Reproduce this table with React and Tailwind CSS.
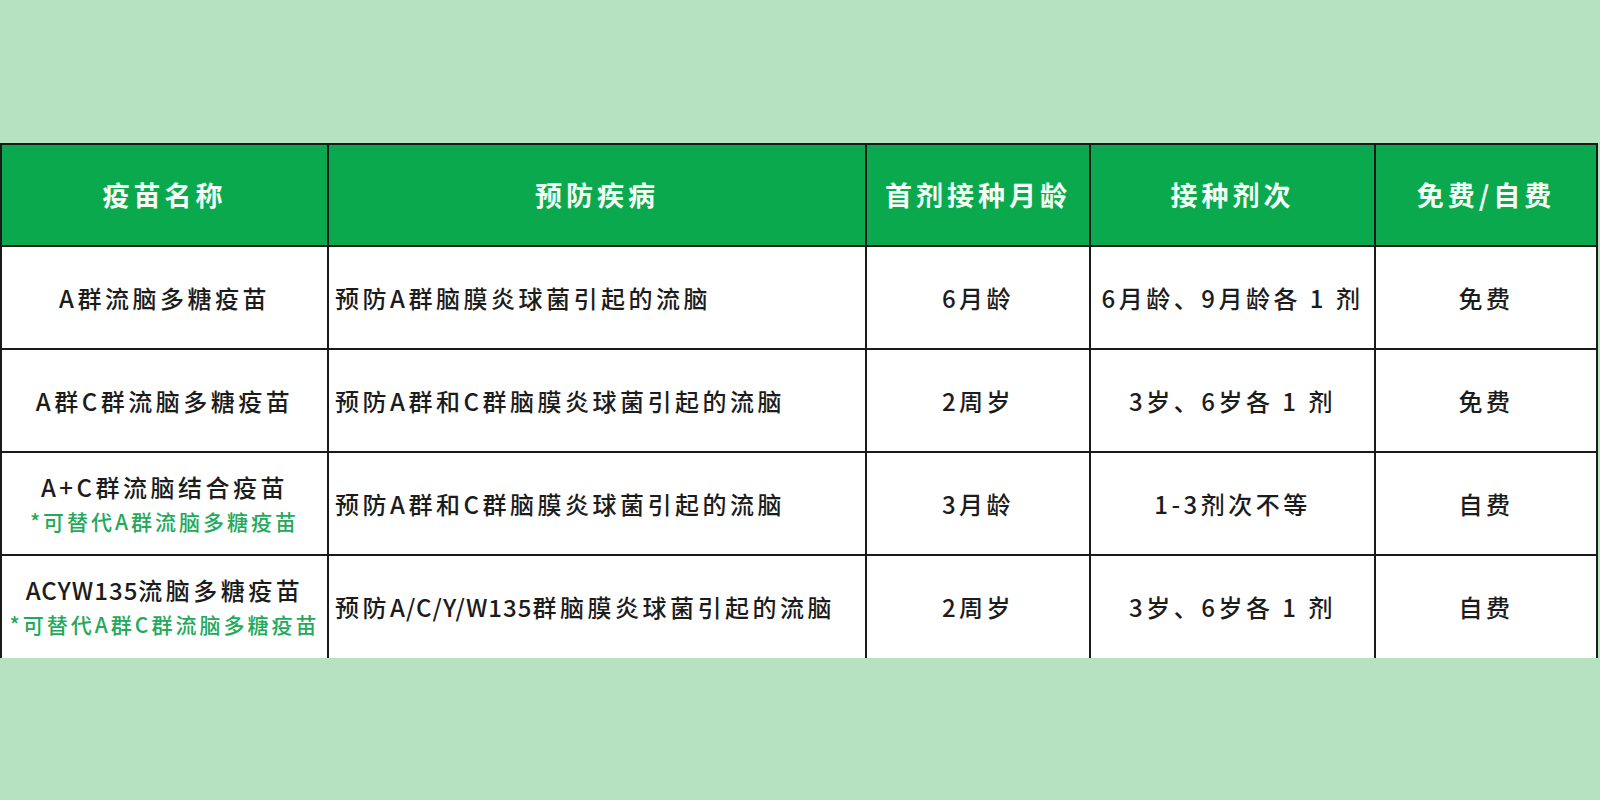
import React from 'react';

const font = { fontFamily: '"Noto Sans CJK SC", "Noto Sans", sans-serif' };

const headers = ['疫苗名称', '预防疾病', '首剂接种月龄', '接种剂次', '免费/自费'];

const rows = [
  { name: 'A群流脑多糖疫苗', note: null, disease: '预防A群脑膜炎球菌引起的流脑', age: '6月龄', doses: '6月龄、9月龄各 1 剂', fee: '免费' },
  { name: 'A群C群流脑多糖疫苗', note: null, disease: '预防A群和C群脑膜炎球菌引起的流脑', age: '2周岁', doses: '3岁、6岁各 1 剂', fee: '免费' },
  { name: 'A+C群流脑结合疫苗', note: '*可替代A群流脑多糖疫苗', disease: '预防A群和C群脑膜炎球菌引起的流脑', age: '3月龄', doses: '1-3剂次不等', fee: '自费' },
  { name: 'ACYW135流脑多糖疫苗', note: '*可替代A群C群流脑多糖疫苗', disease: '预防A/C/Y/W135群脑膜炎球菌引起的流脑', age: '2周岁', doses: '3岁、6岁各 1 剂', fee: '自费' },
];

// long latin runs (ACYW135, A/C/Y/W135) are set tighter, like the half-width glyphs in the source
function Txt({ children }) {
  const parts = children.split(/([A-Za-z0-9/]{5,})/);
  return parts.map((p, i) =>
    i % 2 === 1 ? <span key={i} className="tracking-[1px]">{p}</span> : <React.Fragment key={i}>{p}</React.Fragment>
  );
}

export default function App() {
  return (
    <div className="w-full h-[800px] bg-[#b6e2c1] pt-[143px]" style={font}>
      <table className="w-[1598px] border-collapse table-fixed">
        <colgroup>
          <col className="w-[327px]" />
          <col className="w-[538px]" />
          <col className="w-[224px]" />
          <col className="w-[285px]" />
          <col />
        </colgroup>
        <thead>
          <tr className="h-[102px] bg-[#0aa94e]">
            {headers.map((h) => (
              <th key={h} className="border-2 border-[#1a1a1a] text-[#f4fff6] text-[27px] font-bold tracking-[4px] text-center">
                {h}
              </th>
            ))}
          </tr>
        </thead>
        <tbody>
          {rows.map((r, i) => {
            const last = i === rows.length - 1;
            const cell = last
              ? 'border-2 border-b-0 border-[#1a1a1a]'
              : 'border-2 border-[#1a1a1a]';
            return (
              <tr key={r.name} className="h-[103px] bg-white text-[#1c1c1c] text-[24px] font-medium tracking-[3.5px]">
                <td className={cell + ' text-center leading-[35px]'}>
                  <div><Txt>{r.name}</Txt></div>
                  {r.note && <div className="text-[#22a95a] text-[21px] tracking-[3px]">{r.note}</div>}
                </td>
                <td className={cell + ' text-left pl-[6px]'}><Txt>{r.disease}</Txt></td>
                <td className={cell + ' text-center'}>{r.age}</td>
                <td className={cell + ' text-center'}>{r.doses}</td>
                <td className={cell + ' text-center'}>{r.fee}</td>
              </tr>
            );
          })}
        </tbody>
      </table>
    </div>
  );
}
